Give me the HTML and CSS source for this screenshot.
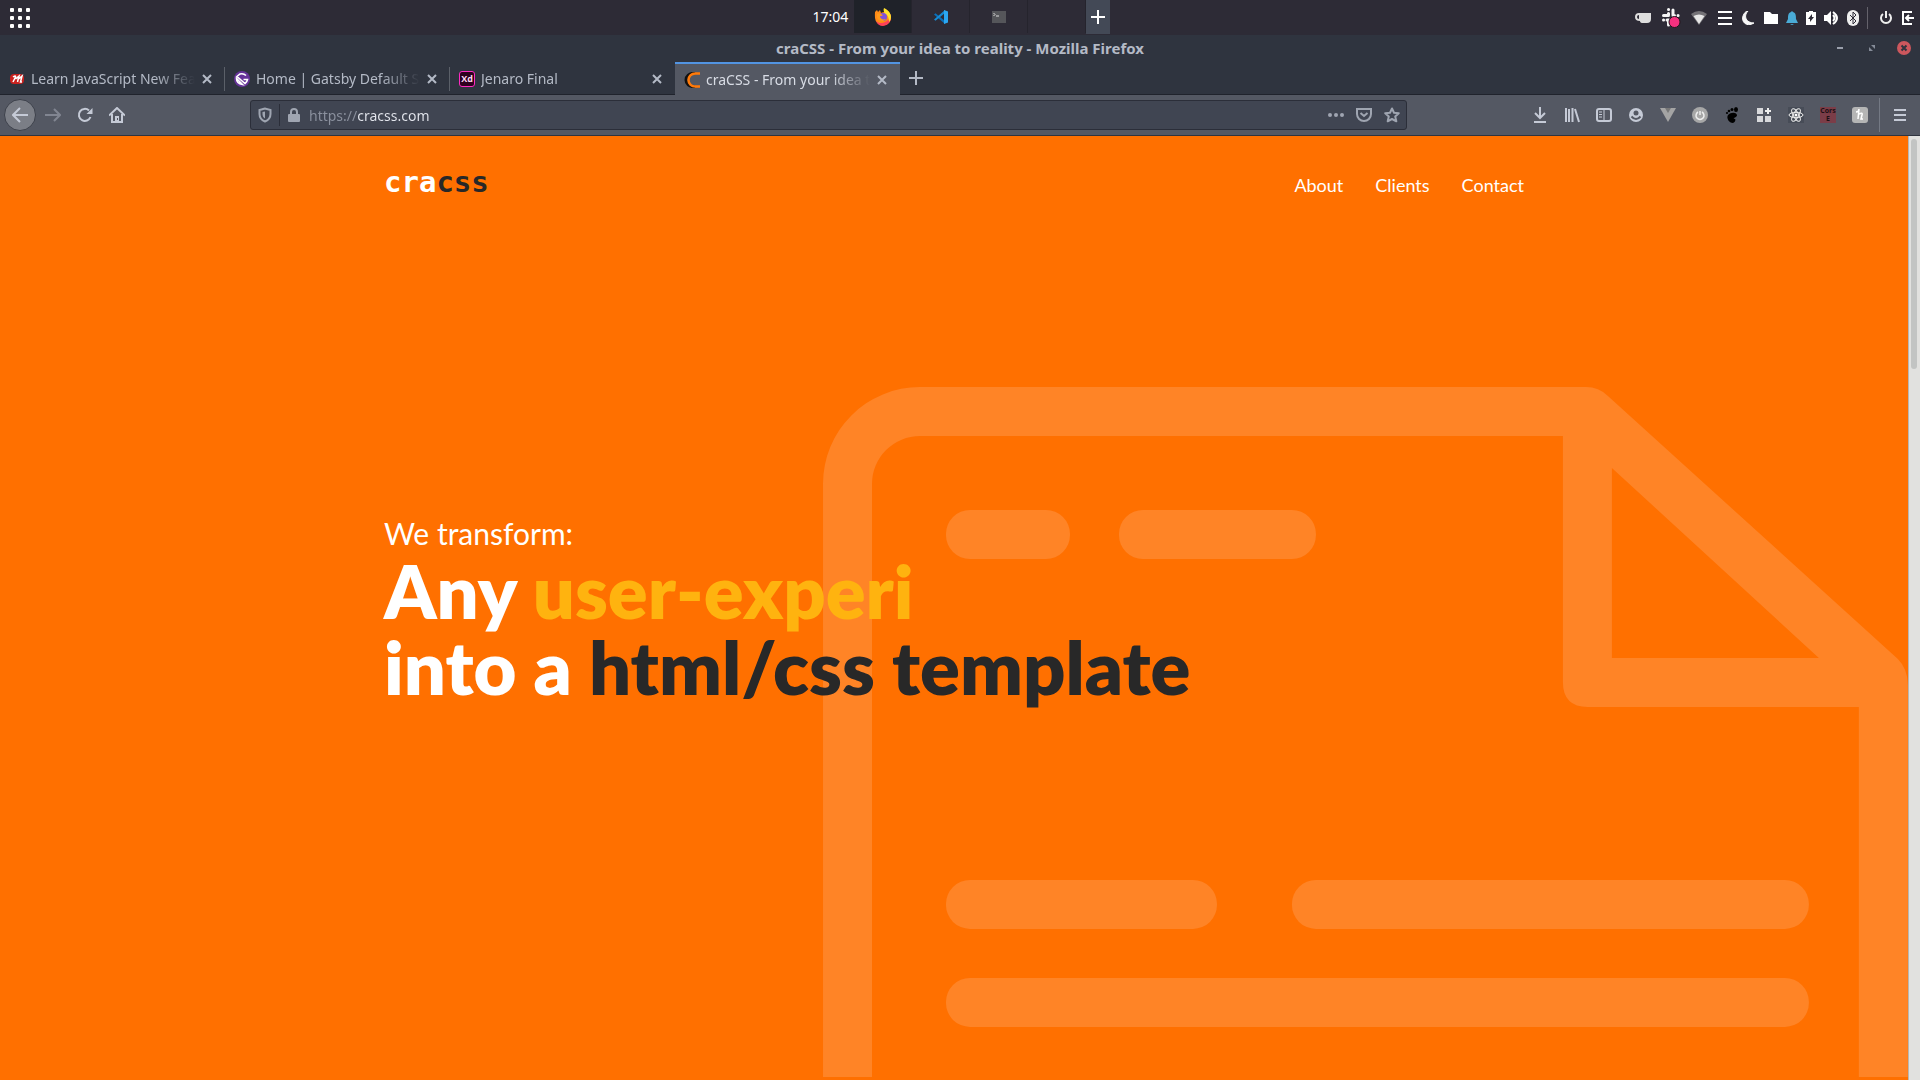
FILE: index.html
```html
<!DOCTYPE html>
<html lang="en">
<head>
<meta charset="utf-8">
<meta name="viewport" content="width=device-width, initial-scale=1">
<title>craCSS - From your idea to reality</title>
<link rel="stylesheet" href="styles.css">
</head>
<body>
<header class="panel">
  <div class="panel-start">
    <button class="icon-button" aria-label="Applications">
      <svg width="20" height="20" viewBox="0 0 20 20" fill="#fff"><rect width="4" height="4" rx="1"/><rect x="8" width="4" height="4" rx="1"/><rect x="16" width="4" height="4" rx="1"/><rect y="8" width="4" height="4" rx="1"/><rect x="8" y="8" width="4" height="4" rx="1"/><rect x="16" y="8" width="4" height="4" rx="1"/><rect y="16" width="4" height="4" rx="1"/><rect x="8" y="16" width="4" height="4" rx="1"/><rect x="16" y="16" width="4" height="4" rx="1"/></svg>
    </button>
  </div>
  <div class="panel-middle">
    <time class="clock">17:04</time>
    <button class="task task-active" aria-label="Firefox">
      <svg width="18" height="18" viewBox="0 0 18 18"><path d="M1 4l2-2 1 2 2-2 1 3c1-1 3-1 4-1V1c3 1 6 5 6 8a8 8 0 0 1-16 1C.700 8 1 6 1 4z" fill="#ff8a16"/><path d="M2 13c3 3 9 3 13-2 1-2 1-4 1-5 2 4 1 11-7 12-3 0-6-2-7-5z" fill="#ff4058"/><path d="M10 0c4 2 7 5 7 9 0 2-1 4-2 5 0-4-1-7-4-8-1-2-2-4-1-6z" fill="#ffe22b"/><circle cx="9" cy="9" r="4" fill="#8152d8"/><path d="M3 6c2-1 4 0 6 1-1 1-2 1-3 1 0 3 3 4 6 3-2 3-8 3-9-2z" fill="#ff9a1b"/></svg>
    </button>
    <button class="task" aria-label="Code editor">
      <svg width="16" height="16" viewBox="0 0 16 16"><path d="M1 5.500l1.500-1.200L12 12v3z" fill="#0a6fb8"/><path d="M1 10.500l1.500 1.200L12 4V1z" fill="#168bd4"/><path d="M11 1l4 1.500v11L11 15z" fill="#2ba7f2"/></svg>
    </button>
    <button class="task" aria-label="Terminal">
      <svg width="14" height="12" viewBox="0 0 14 12"><path fill="#55565a" d="M0 0h14v12H0z"/><path d="M1.500 2l1.500 1.500L1.500 5M4 5h3" stroke="#ddd" fill="none"/></svg>
    </button>
    <span class="task"></span>
    <button class="add-task" aria-label="Add">
      <svg width="14" height="14" viewBox="0 0 14 14" stroke="#fff" stroke-width="2"><path d="M7 0v14M0 7h14"/></svg>
    </button>
  </div>
  <div class="panel-end">
    <svg width="18" height="12" viewBox="0 0 18 12"><path d="M5 1h12v6q0 4-4 4H9Q6 11 6 9 1 9 1 5t4-4z" fill="#dedede"/><path d="M5 3v4Q3 7 3 5t2-2z" fill="#2d2b36"/></svg>
    <svg width="22" height="22" viewBox="0 0 22 22"><g stroke="#f5f5f5" stroke-width="3" stroke-linecap="round"><path d="M8.500 6.500v1.500M8.500 2.500h.1M13 3v5M3.500 8.500h5M18 8.500h.1M13 8.500h1.500M3.500 13h.1M7 13h2M8.500 13v5"/></g><circle cx="14.500" cy="15" r="5.500" fill="#f5317f" stroke="#25131c"/></svg>
    <svg width="18" height="18" viewBox="0 0 18 18"><path d="M1 5q8-6 16 0l-8 11z" fill="#747277"/><path d="M3.500 7q5.500-3 11 0L9 15z" fill="#e6e6e6"/></svg>
    <svg width="18" height="16" viewBox="0 0 18 16" stroke="#fff" stroke-width="2"><path d="M2 2h14M2 8h14M2 14h14"/></svg>
    <svg width="13" height="14" viewBox="0 0 13 14"><path d="M6 0C1 5 4 12 12 12 4 17-1 10 1 5 2 2 4 0 6 0z" fill="#f7f7f7" stroke="#f7f7f7"/></svg>
    <svg width="15" height="14" viewBox="0 0 15 14"><path d="M1 1h6l2 2h6v10H1z" fill="#fff"/></svg>
    <svg width="12" height="14" viewBox="0 0 12 14"><path d="M6 0l1 1c3 1 3 4 3 7l2 4H0l2-4c0-3 0-6 3-7zM4 13h4l-2 1z" fill="#4aabd6"/></svg>
    <svg width="10" height="14" viewBox="0 0 10 14"><path d="M0 1h3V0h4v1h3v13H0z" fill="#fff"/><path d="M6 3L2 8h2v3l4-5H6z" fill="#2d2b36"/></svg>
    <svg width="15" height="14" viewBox="0 0 15 14"><path d="M0 4h3l4-4v14l-4-4H0z" fill="#fff"/><path d="M9 4q3 3 0 6M9 1q8 6 0 12" stroke="#fff" stroke-width="2" fill="none"/></svg>
    <svg width="12" height="16" viewBox="0 0 12 16"><rect width="12" height="16" rx="6" fill="#eee"/><path d="M3 5l6 6-3 3V2l3 3-6 6" fill="none" stroke="#2d2b36"/></svg>
    <span class="panel-rule"></span>
    <button class="icon-button session" aria-label="Power"><svg width="12" height="14" viewBox="0 0 12 14" stroke="#eee" stroke-width="2" fill="none"><path d="M6 0v7M3 3a5 5 0 1 0 6 0"/></svg></button>
    <button class="icon-button" aria-label="Log out"><svg width="14" height="14" viewBox="0 0 14 14" fill="none" stroke="#fff" stroke-width="2"><path d="M12 1H3v12h9M6 7h8M9 4L6 7l3 3"/></svg></button>
  </div>
</header>

<div class="titlebar">
  <p class="window-title">craCSS - From your idea to reality - Mozilla Firefox</p>
  <div class="window-controls">
    <button class="icon-button" aria-label="Minimize"><svg width="14" height="14" viewBox="0 0 14 14"><path d="M4 6h6v2H4z" fill="#9a9fab"/></svg></button>
    <button class="icon-button" aria-label="Restore"><svg width="14" height="14" viewBox="0 0 14 14"><path d="M6 4h4v4zM4 6v4h4z" fill="#858b98"/></svg></button>
    <button class="icon-button" aria-label="Close"><svg width="14" height="14" viewBox="0 0 14 14"><circle cx="7" cy="7" r="7" fill="#cc575d"/><path d="M4.500 4.500l5 5m0-5l-5 5" stroke="#2f343f" stroke-width="2"/></svg></button>
  </div>
</div>

<nav class="tabs" aria-label="Tabs">
  <div class="tab">
    <svg width="16" height="16" viewBox="0 0 16 16"><rect x="1" y="3" width="14" height="10" rx="4" fill="#c9211e"/><path d="M4 6Q7 4 6.500 6L4 11M6.500 8L10 5 8.500 11M9.500 8L13 5 11.500 11h1.500" fill="none" stroke="#fff" stroke-width="1.500"/></svg>
    <a class="tab-title" href="#">Learn JavaScript New Features</a>
    <button class="tab-close" aria-label="Close tab"><svg width="10" height="10" viewBox="0 0 10 10"><path d="M1 1l8 8M9 1L1 9"/></svg></button>
  </div>
  <div class="tab">
    <svg width="16" height="16" viewBox="0 0 16 16"><circle cx="8" cy="8" r="8" fill="#663399"/><path d="M12 4.500Q9.500 2 6 3L3 5.500l8 7Q13 11 13.500 8.500H9.500M2.500 7.500Q2.500 12.500 8.500 13.500z" fill="none" stroke="#fff" stroke-width="1.600"/></svg>
    <a class="tab-title" href="#">Home | Gatsby Default Starter</a>
    <button class="tab-close" aria-label="Close tab"><svg width="10" height="10" viewBox="0 0 10 10"><path d="M1 1l8 8M9 1L1 9"/></svg></button>
  </div>
  <div class="tab tab-last">
    <span class="xd-icon">Xd</span>
    <a class="tab-title" href="#">Jenaro Final</a>
    <button class="tab-close" aria-label="Close tab"><svg width="10" height="10" viewBox="0 0 10 10"><path d="M1 1l8 8M9 1L1 9"/></svg></button>
  </div>
  <div class="tab tab-active">
    <svg width="16" height="16" viewBox="0 0 16 16" fill="none"><path d="M11 1.500C-1 0-1 16 11 14.500" stroke="#111" stroke-width="3"/><path d="M16 1.500H12C2 1 2 15 12 14.500h4" stroke="#ff7a0a" stroke-width="2.500"/></svg>
    <a class="tab-title" href="#">craCSS - From your idea to reality</a>
    <button class="tab-close" aria-label="Close tab"><svg width="10" height="10" viewBox="0 0 10 10"><path d="M1 1l8 8M9 1L1 9"/></svg></button>
  </div>
  <button class="new-tab" aria-label="New tab"><svg width="14" height="14" viewBox="0 0 14 14"><path d="M7 0v14M0 7h14"/></svg></button>
</nav>

<div class="toolbar">
  <div class="tools">
    <button class="tool tool-back" aria-label="Back"><svg width="16" height="16" viewBox="0 0 16 16"><path d="M16 8H1M8 1L1 8l7 7"/></svg></button>
    <button class="tool tool-disabled" aria-label="Forward"><svg width="16" height="16" viewBox="0 0 16 16"><path d="M0 8h15M9 2l6 6-6 6"/></svg></button>
    <button class="tool" aria-label="Reload"><svg width="16" height="16" viewBox="0 0 16 16"><path d="M12 3.500A6 6 0 1 0 13.500 10"/><path d="M15.500 1v6h-6z" fill="#c5cad6" stroke="none"/></svg></button>
    <button class="tool" aria-label="Home"><svg width="16" height="16" viewBox="0 0 16 16"><path d="M0 8.500L8 1l8 7.500M3 7v8h10V7"/><path d="M6 9h4v6H6z" fill="#c5cad6" stroke="none"/><path d="M8 11h1v2H8z" fill="#545863" stroke="none"/></svg></button>
  </div>
  <form class="address">
    <svg width="14" height="16" viewBox="0 0 14 16" fill="none" stroke="#9fa5b1" stroke-width="2"><path d="M7 1.500L1.500 3v4c0 4 2 6 5.500 7.500C10.500 13 12.500 11 12.500 7V3z"/><path d="M7 4.500v7C5 10 4.500 9 4.500 7V5z" fill="#9fa5b1" stroke="none"/></svg>
    <span class="address-rule"></span>
    <svg width="14" height="16" viewBox="0 0 14 16"><rect x="1" y="7" width="12" height="8" rx="1" fill="#9fa5b1"/><path d="M4 8V5a3 3 0 0 1 6 0v3" fill="none" stroke="#9fa5b1" stroke-width="2"/></svg>
    <input class="address-input" type="text" value="https://cracss.com" aria-label="Address">
    <button type="button" class="icon-button" aria-label="Page actions"><svg width="16" height="16" viewBox="0 0 16 16" fill="#9fa5b1"><circle cx="2" cy="8" r="2"/><circle cx="8" cy="8" r="2"/><circle cx="14" cy="8" r="2"/></svg></button>
    <button type="button" class="icon-button" aria-label="Save to Pocket"><svg width="16" height="16" viewBox="0 0 16 16" fill="none" stroke="#9fa5b1" stroke-width="2"><path d="M1 2h14v5a7 7 0 0 1-14 0zM4.500 6L8 9l3.500-3"/></svg></button>
    <button type="button" class="icon-button" aria-label="Bookmark"><svg width="16" height="16" viewBox="0 0 16 16" fill="none" stroke="#9fa5b1" stroke-width="2" stroke-linejoin="round"><path d="M8 1.500l2 4.200 4.800.500-3.600 3.200 1.100 4.900L8 12l-4.300 2.300 1.100-4.900L1.200 6.200 6 5.700z"/></svg></button>
  </form>
  <div class="tools tools-end">
    <button class="tool" aria-label="Downloads"><svg width="16" height="16" viewBox="0 0 16 16"><path d="M8 0v10M3 6l5 5 5-5M2 15h12"/></svg></button>
    <button class="tool" aria-label="Library"><svg width="16" height="16" viewBox="0 0 16 16"><path d="M2 1v14M5 2v13M8.500 1v14M11 2l4 13"/></svg></button>
    <button class="tool" aria-label="Sidebar"><svg width="16" height="16" viewBox="0 0 16 16"><rect x="1" y="2" width="14" height="12" rx="2"/><path d="M8 2v12M3 5h3M3 7.500h3M3 10h3" stroke-width="1"/></svg></button>
    <button class="tool" aria-label="Account"><svg width="16" height="16" viewBox="0 0 16 16"><circle cx="8" cy="8" r="7" fill="#c5cad6" stroke="none"/><circle cx="8" cy="6" r="2.500" fill="#545863" stroke="none"/><path d="M3.500 9.500q4.500 5 9 0" stroke="#545863"/></svg></button>
    <button class="tool" aria-label="Vue devtools"><svg width="16" height="16" viewBox="0 0 16 16"><path d="M0 1h16L8 15z" fill="#a4a4a4" stroke="none"/><path d="M5 1l3 5 3-5" fill="#777" stroke="none"/></svg></button>
    <button class="tool" aria-label="Power extension"><svg width="16" height="16" viewBox="0 0 16 16"><circle cx="8" cy="8" r="8" fill="#a7a7a7" stroke="none"/><path d="M8 4v4M6 5a4 4 0 1 0 4 0" stroke="#eee" stroke-width="1.500"/></svg></button>
    <button class="tool" aria-label="GNOME extensions"><svg width="16" height="16" viewBox="0 0 16 16"><g fill="#000" stroke="none"><ellipse cx="12" cy="2.500" rx="2" ry="2.500"/><circle cx="8" cy="2.500" r="1.500"/><circle cx="5" cy="4" r="1.300"/><circle cx="3" cy="6" r="1.100"/><path d="M4 8c3-3 8-3 9 0 0 3-4 2-3 4 2-1 2 3-1 4-4 0-7-5-5-8z"/></g></svg></button>
    <button class="tool" aria-label="Extensions"><svg width="16" height="16" viewBox="0 0 16 16"><path d="M1 1h6v6H1zM1 9h6v6H1zM9 9h6v6H9z" fill="#d8d9dc" stroke="none"/><path d="M12 1v6M9 4h6" stroke="#eee"/></svg></button>
    <button class="tool" aria-label="React devtools"><svg width="16" height="16" viewBox="0 0 16 16"><path d="M0 0h16v16H0z" fill="#474c57" stroke="none"/><g stroke="#eee" stroke-width="1"><ellipse cx="8" cy="8" rx="7" ry="2.700"/><ellipse cx="8" cy="8" rx="7" ry="2.700" transform="rotate(60 8 8)"/><ellipse cx="8" cy="8" rx="7" ry="2.700" transform="rotate(120 8 8)"/></g><circle cx="8" cy="8" r="1.500" fill="#fff" stroke="none"/></svg></button>
    <button class="tool"><span class="cors-icon">Cors<br>E</span></button>
    <button class="tool" aria-label="Honey"><svg width="16" height="16" viewBox="0 0 16 16"><rect width="16" height="16" rx="3" fill="#b5b5b5" stroke="none"/><path d="M4 5q3 0 3-3L6 12M7 7q4-2 3 1l-1 4h2" stroke="#fff" stroke-width="1.500"/></svg></button>
  </div>
  <span class="toolbar-rule"></span>
  <button class="tool tool-menu" aria-label="Menu"><svg width="14" height="14" viewBox="0 0 14 14"><path d="M1 2h12M1 7h12M1 12h12"/></svg></button>
</div>

<div class="viewport">
  <div class="page">
    <svg class="art" viewBox="0 0 1085 693" aria-hidden="true">
      <path fill="#ff8426" fill-rule="evenodd" d="M0 690V97A97 97 0 0 1 97 0H763Q776 0 785 9L1075 272Q1085 282 1085 298V690H1036V320H765Q740 320 740 295V49H97A48 48 0 0 0 49 97V690ZM789 81V271H996Z"/>
      <g fill="#ff8426"><rect x="123" y="123" width="124" height="49" rx="24"/><rect x="296" y="123" width="197" height="49" rx="24"/><rect x="123" y="493" width="271" height="49" rx="24"/><rect x="469" y="493" width="517" height="49" rx="24"/><rect x="123" y="591" width="863" height="49" rx="24"/></g>
    </svg>
    <div class="content">
      <header class="site-header">
        <a class="logo" href="#">cra<span class="dark">css</span></a>
        <nav class="site-nav"><a href="#">About</a><a href="#">Clients</a><a href="#">Contact</a></nav>
      </header>
      <main class="hero">
        <p class="lead">We transform:</p>
        <h1 class="headline">Any <span class="accent">user-experi</span><br>into a <span class="dark">html/css template</span></h1>
      </main>
    </div>
  </div>
  <div class="scrollbar"><div class="thumb"></div></div>
</div>
</body>
</html>
```
FILE: styles.css
```css
* { box-sizing: border-box; }

body {
  margin: 0;
  min-height: 100vh;
  display: flex;
  flex-direction: column;
  font: 14px/20px "Noto Sans", sans-serif;
  color: #b4bac6;
  background: #2f343f;
}

svg { display: block; flex: none; }
a { color: inherit; text-decoration: none; }
p, h1 { margin: 0; }

button {
  padding: 0;
  border: 0;
  background: none;
  color: inherit;
  font: inherit;
  display: flex;
  align-items: center;
  justify-content: center;
  flex: none;
}

/* Desktop panel */
.panel {
  display: grid;
  grid-template-columns: 1fr auto 1fr;
  height: 35px;
  background: #2d2b36;
}
.panel-start { display: flex; align-items: center; padding-left: 10px; }
.panel-middle { display: flex; padding-left: 3px; }
.clock { padding: 7px 6px 0 0; color: #fff; }
.task {
  display: flex;
  width: 58px;
  height: 33px;
  border-right: 1px solid #25242d;
}
.task-active { background: #1f2229; }
.add-task { width: 24px; height: 34px; background: #434956; }
.panel-end {
  display: flex;
  align-items: center;
  justify-content: flex-end;
  gap: 8px;
  padding-right: 6px;
}
.panel-rule { width: 1px; height: 22px; background: #64626b; }
.session { padding-left: 4px; }

/* Window title */
.titlebar {
  display: grid;
  grid-template-columns: 1fr auto 1fr;
  align-items: center;
  height: 27px;
  padding-bottom: 1px;
}
.window-title { grid-column: 2; font-size: 15px; font-weight: 700; }
.window-controls { display: flex; justify-content: flex-end; gap: 18px; padding-right: 9px; }

/* Tabs */
.tabs { display: flex; height: 33px; border-bottom: 1px solid #20232c; }
.tab {
  position: relative;
  display: flex;
  align-items: center;
  gap: 6px;
  width: 225px;
  padding: 2px 12px 0 9px;
}
.tab::after {
  content: "";
  position: absolute;
  right: 0;
  width: 1px;
  height: 24px;
  background: #5b6069;
}
.tab-last::after { display: none; }
.tab-title {
  flex: 1;
  overflow: hidden;
  white-space: nowrap;
  mask-image: linear-gradient(to right, #000 calc(100% - 40px), transparent);
}
.tab-close { width: 12px; height: 20px; }
.tab-close svg, .new-tab svg { stroke: #b4bac6; stroke-width: 2; }
.tab-active {
  height: 33px;
  padding-top: 0;
  background: #545863;
  border-top: 2px solid #5294e2;
  color: #d8dce5;
}
.tab-active::after { display: none; }
.new-tab { width: 32px; }
.xd-icon {
  width: 16px;
  height: 16px;
  border: 1px solid #ff2bc2;
  border-radius: 3px;
  background: #2e001e;
  color: #ffd9f2;
  font: 700 9px/14px "Open Sans", sans-serif;
  text-align: center;
}

/* Toolbar */
.toolbar {
  display: flex;
  align-items: center;
  height: 41px;
  padding-left: 4px;
  background: #545863;
  border-bottom: 1px solid #2f343f;
}
.tools { display: flex; }
.tool { width: 32px; height: 32px; }
.tool svg { fill: none; stroke: #c5cad6; stroke-width: 2; }
.tool-back { border: 1px solid #3d414b; border-radius: 50%; background: #7b7e86; margin-right: 1px; }
.tool-disabled { opacity: 0.400; }
.tools-end { margin-right: 3px; }
.toolbar-rule { width: 1px; height: 34px; background: #747984; }
.tool-menu { width: 40px; }
.cors-icon {
  width: 16px;
  height: 16px;
  background: #7b3d48;
  color: #1d1015;
  font: 700 7px/8px "Open Sans", sans-serif;
}
.address {
  display: flex;
  align-items: center;
  gap: 7px;
  flex: 1;
  height: 30px;
  margin: 0 117px;
  padding: 0 6px 0 7px;
  background: #404552;
  border: 1px solid #2b2e39;
  border-radius: 3px;
}
.address .icon-button { margin-left: 5px; }
.address-rule { width: 1px; height: 22px; background: #2b2e39; }
.address-input {
  flex: 1;
  min-width: 0;
  padding: 2px 0 0 1px;
  border: 0;
  outline: 0;
  font: inherit;
  background: linear-gradient(to right, #8b919e 50px, #e4e7ee 50px);
  background-clip: text;
  -webkit-text-fill-color: transparent;
}

/* Web page */
.viewport { flex: 1; display: flex; background: #ff7000; }
.page { flex: 1; display: grid; overflow: hidden; }
.art { grid-area: 1 / 1; align-self: end; justify-self: end; width: 56.86%; }
.content {
  grid-area: 1 / 1;
  z-index: 1;
  display: flex;
  flex-direction: column;
  width: 100%;
  max-width: 1140px;
  margin: 0 auto;
  color: #fff;
}
.site-header {
  display: flex;
  align-items: center;
  justify-content: space-between;
  padding-top: 28px;
}
.logo { font: 700 29px/36px "DejaVu Sans Mono", monospace; }
.site-nav { display: flex; gap: 32px; padding-top: 6px; font: 18px/24px Lato, sans-serif; }
.dark { color: #282828; }
.accent { color: #ffb30f; }
.hero { padding-top: 313px; }
.lead { font: 30px/40px Lato, sans-serif; }
.headline { font: 800 74px/76px Lato, sans-serif; }

.scrollbar { width: 12px; padding: 3px 3px 0 2px; background: #e1e1df; border-left: 1px solid #b5b7b5; }
.thumb { height: 230px; border-radius: 4px; background: #c2c4c3; }
```
